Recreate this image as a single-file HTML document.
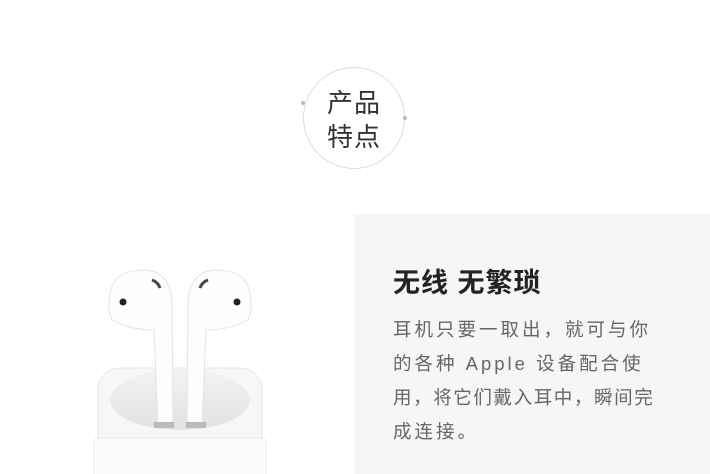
<!DOCTYPE html>
<html><head><meta charset="utf-8"><style>
body{margin:0;width:710px;height:474px;background:#fff;position:relative;overflow:hidden;font-family:"Liberation Sans","Noto Sans CJK SC",sans-serif}
.panel{position:absolute;left:354px;top:214px;width:356px;height:260px;background:#f6f6f6}
.circ{position:absolute;left:303px;top:67px;width:102px;height:102px;border:1px solid #dcdcdc;border-radius:50%;box-sizing:border-box}
.dot{position:absolute;width:4px;height:4px;border-radius:50%;background:#bbb}
.ct{position:absolute;left:304px;top:86px;width:100px;text-align:center;font-size:26px;line-height:34px;color:#333;letter-spacing:1px}
h2{position:absolute;left:393px;top:264px;margin:0;font-size:27px;font-weight:bold;color:#222;line-height:38px;letter-spacing:1px}
.p{position:absolute;left:393px;top:313px;width:320px;font-size:18.5px;line-height:34px;color:#666;letter-spacing:3px;white-space:nowrap}
</style></head><body>
<div class="circ"></div>
<div class="dot" style="left:301px;top:101px"></div>
<div class="dot" style="left:403px;top:116px"></div>
<div class="ct">产品<br>特点</div>
<div class="panel"></div>
<svg style="position:absolute;left:90px;top:250px" width="200" height="224">
<defs><linearGradient id="g" x1="0" y1="0" x2="0" y2="1"><stop offset="0" stop-color="#f2f2f2"/><stop offset="1" stop-color="#e2e2e2"/></linearGradient></defs>
<rect x="8" y="118" width="164" height="120" rx="22" fill="#f7f7f7" stroke="#e6e6e6"/>
<ellipse cx="90" cy="150" rx="70" ry="30" fill="url(#g)"/>
<rect x="4" y="188" width="172" height="40" rx="4" fill="#fbfbfb" stroke="#ececec"/>
<path d="M20 45 Q22 20 55 20 Q82 22 82 55 L83 175 Q80 180 68 178 L64 80 Q40 80 22 70 Q17 60 20 45Z" fill="#fdfdfd" stroke="#e4e4e4"/>
<path d="M160 45 Q158 20 125 20 Q98 22 98 55 L97 175 Q100 180 112 178 L116 80 Q140 80 158 70 Q163 60 160 45Z" fill="#fdfdfd" stroke="#e4e4e4"/>
<circle cx="33" cy="52" r="3.5" fill="#222"/><circle cx="147" cy="52" r="3.5" fill="#222"/>
<path d="M62 30 Q68 32 70 38" stroke="#444" stroke-width="3" fill="none"/>
<path d="M118 30 Q112 32 110 38" stroke="#444" stroke-width="3" fill="none"/>
<rect x="64" y="172" width="20" height="6" fill="#bbb"/><rect x="96" y="172" width="20" height="6" fill="#bbb"/>
</svg>
<h2>无线 无繁琐</h2>
<div class="p">耳机只要一取出，就可与你<br>的各种 Apple 设备配合使<br><span style="letter-spacing:1.6px">用，将它们戴入耳中，瞬间完</span><br>成连接。</div>
</body></html>
